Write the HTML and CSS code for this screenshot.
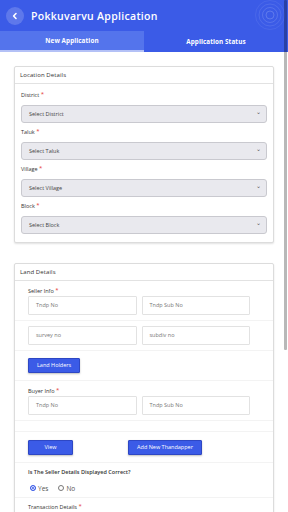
FILE: index.html
```html
<!DOCTYPE html>
<html lang="en">
<head>
  <meta charset="UTF-8" />
  <meta name="viewport" content="width=device-width, initial-scale=1" />
  <title>Pokkuvarvu Application</title>
  <link rel="stylesheet" href="styles.css">
</head>
<body>
  <div class="app">
    <header class="app-bar">
      <button class="back-btn" aria-label="Back">
        <svg width="8" height="8" viewBox="0 0 8 8"><path d="M5 1.5 L2.6 4 L5 6.5" fill="none" stroke="#fff" stroke-width="1.6" stroke-linecap="round" stroke-linejoin="round"/></svg>
      </button>
      <h1 class="title">Pokkuvarvu Application</h1>
      <svg class="rings" width="40" height="40" viewBox="0 0 40 40">
        <circle cx="20" cy="20" r="4" fill="none" stroke="rgba(255,255,255,0.18)" stroke-width="1"/>
        <circle cx="20" cy="20" r="7.5" fill="none" stroke="rgba(255,255,255,0.14)" stroke-width="1"/>
        <circle cx="20" cy="20" r="11" fill="none" stroke="rgba(255,255,255,0.1)" stroke-width="1"/>
        <circle cx="20" cy="20" r="14.5" fill="none" stroke="rgba(255,255,255,0.07)" stroke-width="1"/>
      </svg>
    </header>

    <nav class="tabs">
      <div class="tab active">New Application</div>
      <div class="tab">Application Status</div>
    </nav>

    <main class="content">
      <section class="card">
        <div class="card-head">Location Details</div>
        <div class="card-body">
          <div class="field">
            <label>District <span class="req">*</span></label>
            <div class="select">Select District <span class="caret">&#8964;</span></div>
          </div>
          <div class="field">
            <label>Taluk <span class="req">*</span></label>
            <div class="select">Select Taluk <span class="caret">&#8964;</span></div>
          </div>
          <div class="field">
            <label>Village <span class="req">*</span></label>
            <div class="select">Select Village <span class="caret">&#8964;</span></div>
          </div>
          <div class="field">
            <label>Block <span class="req">*</span></label>
            <div class="select">Select Block <span class="caret">&#8964;</span></div>
          </div>
        </div>
      </section>

      <section class="card">
        <div class="card-head">Land Details</div>
        <div class="row">
          <label>Seller Info <span class="req">*</span></label>
          <div class="pair">
            <div class="input">Tndp No</div>
            <div class="input">Tndp Sub No</div>
          </div>
        </div>
        <div class="row">
          <div class="pair">
            <div class="input">survey no</div>
            <div class="input">subdiv no</div>
          </div>
        </div>
        <div class="row btn-row">
          <button class="btn">Land Holders</button>
        </div>
        <div class="row">
          <label>Buyer Info <span class="req">*</span></label>
          <div class="pair">
            <div class="input">Tndp No</div>
            <div class="input">Tndp Sub No</div>
          </div>
        </div>
        <div class="row spacer"></div>
        <div class="row btn-row two">
          <button class="btn view">View</button>
          <button class="btn add">Add New Thandapper</button>
        </div>
        <div class="row question">
          <p>Is The Seller Details Displayed Correct?</p>
          <div class="radios">
            <span class="radio on"></span><span class="opt">Yes</span>
            <span class="radio"></span><span class="opt">No</span>
          </div>
        </div>
        <div class="row last">
          <label>Transaction Details <span class="req">*</span></label>
        </div>
      </section>
    </main>

    <div class="scroll-thumb"></div>
  </div>
</body>
</html>
```

FILE: styles.css
```css
html, body {
  margin: 0;
  padding: 0;
  height: 100%;
  overflow: hidden;
}

body {
  font-family: "Open Sans", Arial, sans-serif;
  background: #fff;
  color: #333;
}

.app {
  position: relative;
  height: 512px;
  overflow: hidden;
}

.app-bar {
  position: relative;
  height: 31px;
  background: #3b5be7;
  display: flex;
  align-items: center;
  padding-left: 6px;
  overflow: hidden;
}

.back-btn {
  width: 18px;
  height: 18px;
  border: none;
  border-radius: 50%;
  background: rgba(255,255,255,0.18);
  display: flex;
  align-items: center;
  justify-content: center;
  padding: 0;
}

.title {
  margin: 0 0 0 7px;
  color: #fff;
  font-size: 10.5px;
  font-weight: 600;
  letter-spacing: 0.3px;
}

.rings {
  position: absolute;
  right: -2px;
  top: -5px;
}

.tabs {
  display: flex;
  background: #3b5be7;
  height: 21px;
}

.tab {
  flex: 1;
  display: flex;
  align-items: center;
  justify-content: center;
  color: #fff;
  font-size: 6.3px;
  font-weight: 700;
  letter-spacing: 0.1px;
}

.tab.active {
  background: #5474ec;
  border-bottom: 2px solid #b4c1f6;
}

.content {
  padding: 14px 14px 0;
}

.card {
  border: 1px solid #dcdcdc;
  border-radius: 2px;
  box-shadow: 0 1px 2px rgba(0,0,0,0.12);
  margin-bottom: 20px;
  background: #fff;
}

.card-head {
  height: 16px;
  line-height: 16px;
  padding-left: 5px;
  font-size: 6px;
  color: #333;
  border-bottom: 1px solid #e2e2e2;
  letter-spacing: 0.1px;
}

.card-body {
  padding: 6px 6px 8px;
}

label {
  display: block;
  height: 10px;
  font-size: 5.5px;
  line-height: 10px;
  color: #333;
}

.req {
  position: relative;
  top: -1px;
  color: #e53935;
  font-size: 6px;
  line-height: 0;
}

.field label {
  margin-bottom: 5px;
}

.field + .field {
  margin-top: 4px;
}

.select {
  position: relative;
  height: 16px;
  line-height: 16px;
  background: #e9e9ee;
  border: 1px solid #c9c9cf;
  border-radius: 3px;
  padding-left: 7px;
  font-size: 5.5px;
  color: #444;
}

.caret {
  position: absolute;
  right: 5px;
  top: -2px;
  font-size: 6px;
  line-height: 16px;
  color: #555;
}

.row {
  padding: 5px 14px 5px 13px;
  border-bottom: 1px solid #f3f3f3;
}

.row.last {
  padding-top: 4px;
}

.pair {
  display: flex;
  gap: 5px;
  padding-right: 9px;
}

.input {
  flex: 1;
  height: 17px;
  line-height: 17px;
  border: 1px solid #e2e2e2;
  border-radius: 1px;
  padding-left: 7px;
  font-size: 5.5px;
  color: #777;
}

.btn-row {
  display: flex;
  padding-top: 7px;
  padding-bottom: 7px;
}

.btn-row.two {
  padding-top: 8px;
}

.btn {
  height: 15px;
  padding: 0 8px;
  background: #3b5be7;
  color: #fff;
  font-family: "Open Sans", Arial, sans-serif;
  font-size: 5.5px;
  line-height: 13px;
  border: 1px solid #2e47c4;
  border-radius: 1px;
  box-shadow: 0 1px 2px rgba(0,0,0,0.25);
}

.btn.view {
  width: 45px;
}

.btn.add {
  margin-left: 55px;
  width: 74px;
  padding: 0;
}

.spacer {
  height: 0;
  padding: 5px 0;
}

.question {
  padding-top: 4px;
  padding-bottom: 3px;
}

.question p {
  margin: 0;
  font-size: 5.5px;
  font-weight: 600;
  color: #333;
  line-height: 10px;
}

.radios {
  display: flex;
  align-items: center;
  height: 12px;
  margin-top: 5px;
  padding-left: 2px;
  font-size: 6.5px;
  color: #555;
}

.radio {
  width: 4px;
  height: 4px;
  border: 1px solid #777;
  border-radius: 50%;
  margin-right: 2px;
}

.radio.on {
  border-color: #3b5be7;
  background: #3b5be7;
  box-shadow: inset 0 0 0 1px #fff;
}

.opt {
  margin-right: 10px;
}

.scroll-thumb {
  position: absolute;
  top: 0;
  right: 1px;
  width: 3px;
  height: 350px;
  background: rgba(0,0,0,0.28);
  border-radius: 1px;
}
```
